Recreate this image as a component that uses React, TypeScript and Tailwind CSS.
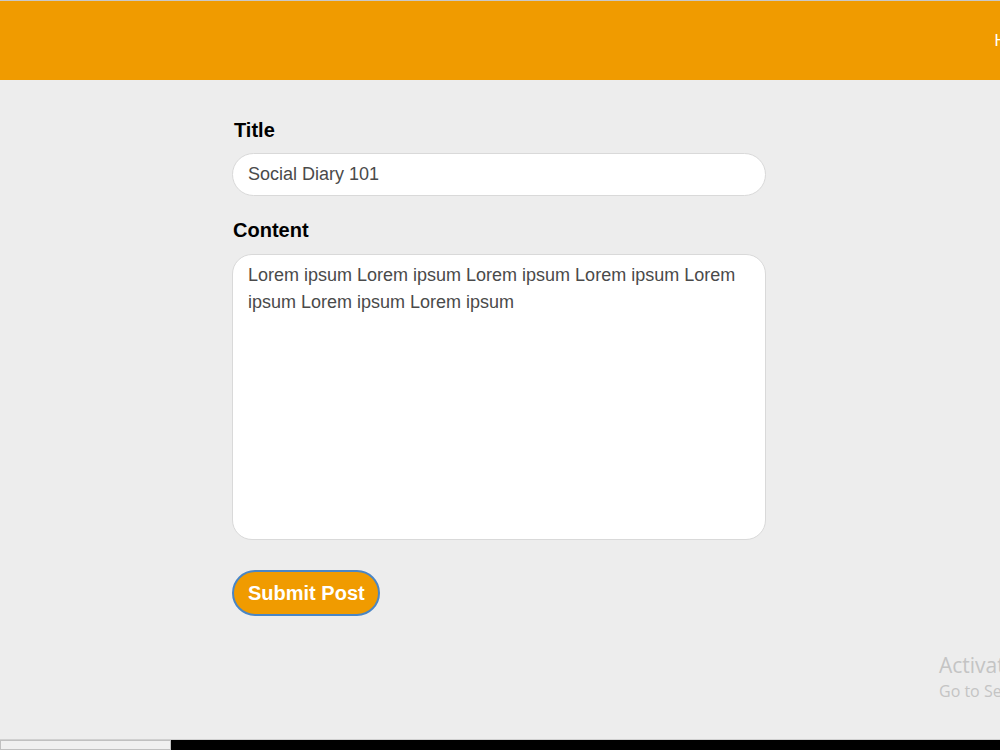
import React from "react";

export default function App() {
  return (
    <div
      className="relative flex h-[750px] w-[1000px] flex-col overflow-hidden bg-[#ededed]"
      style={{ fontFamily: '"Liberation Sans", Arial, sans-serif' }}
    >
      <header className="flex h-[80px] shrink-0 items-center justify-end border-t border-[#c8c8c8] bg-[#f09b00] pr-0">
        <span className="mr-[-6px] text-[16px] text-white">H</span>
      </header>
      <main className="flex-1">
        <form className="ml-[232px] flex w-[534px] flex-col pt-[38px]">
          <label className="ml-[2px] text-[20px] font-bold leading-[24px] text-black">Title</label>
          <input
            defaultValue="Social Diary 101"
            className="mt-[11px] h-[43px] rounded-full border border-[#d9d9d9] bg-white px-[15px] text-[18px] text-[#4a4a4a] outline-none"
          />
          <label className="ml-[1px] mt-[22px] text-[20px] font-bold leading-[24px] text-black">Content</label>
          <textarea
            defaultValue="Lorem ipsum Lorem ipsum Lorem ipsum Lorem ipsum Lorem ipsum Lorem ipsum Lorem ipsum"
            className="mt-[12px] h-[286px] resize-none rounded-[20px] border border-[#d9d9d9] bg-white pl-[15px] pr-[14px] pt-[7px] pb-[6px] text-[18px] leading-[27px] text-[#4a4a4a] outline-none"
          />
          <div className="mt-[30px]">
            <button
              type="button"
              className="h-[46px] rounded-full border-2 border-[#4a86c5] bg-[#f09b00] pl-[14px] pr-[13px] text-[20px] font-bold text-white"
            >
              Submit Post
            </button>
          </div>
        </form>
      </main>
      <div className="flex h-[11px] shrink-0 border-t border-[#d0d0d0]">
        <div className="w-[171px] border border-[#c0c0c0] bg-[#f0f0f0]" />
        <div className="flex-1 bg-black" />
      </div>
      <div className="pointer-events-none absolute left-[939px] top-[651px] text-[#c4c4c4]" style={{ fontFamily: '"Open Sans", "Noto Sans", sans-serif' }}>
        <div className="whitespace-nowrap text-[21px] leading-[28px]">Activate Windows</div>
        <div className="whitespace-nowrap text-[16px] leading-[24px]">Go to Settings to activate Windows.</div>
      </div>
    </div>
  );
}
